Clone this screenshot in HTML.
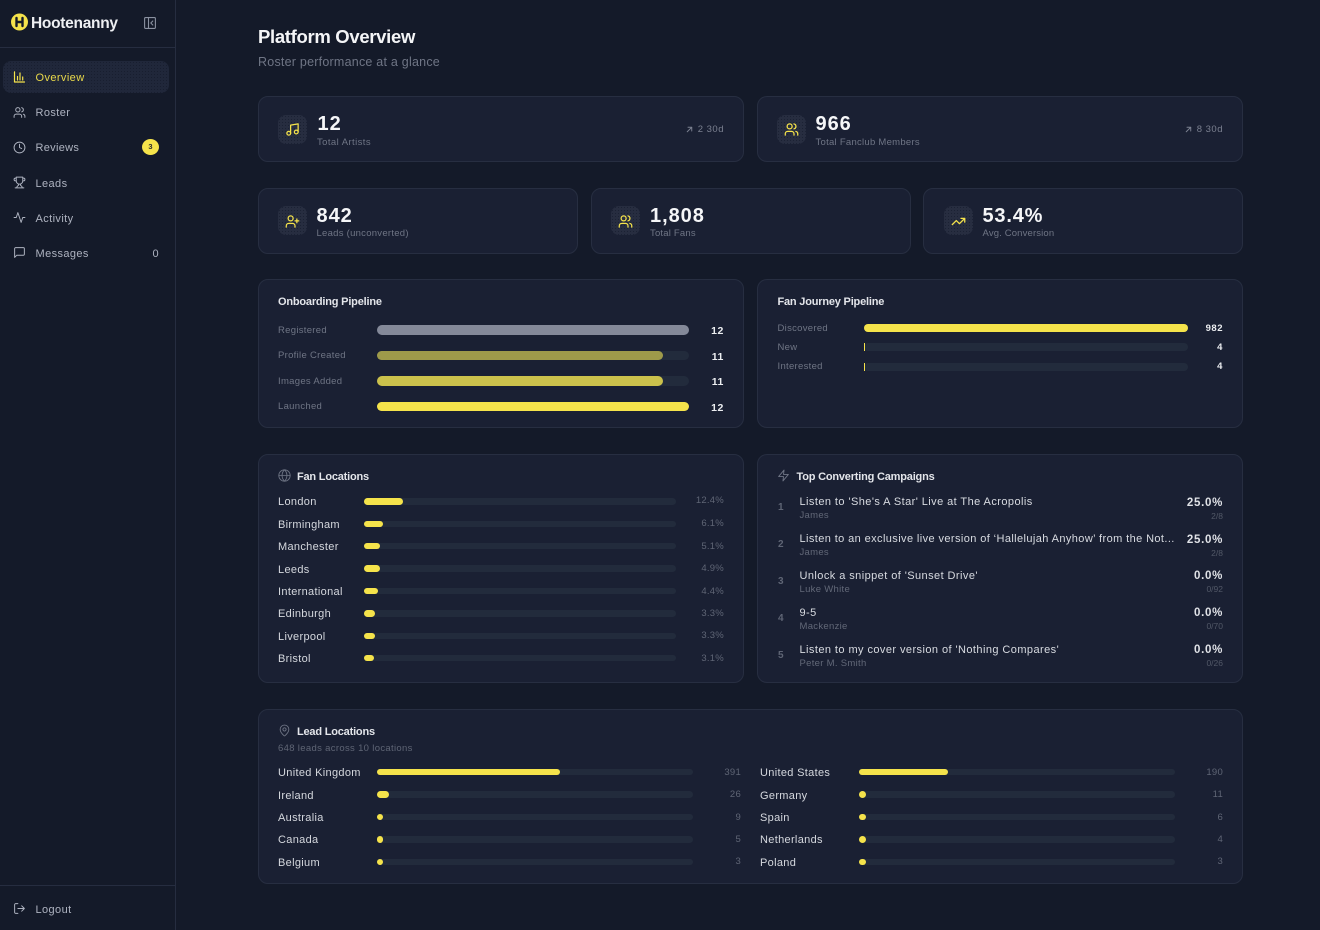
<!DOCTYPE html>
<html lang="en"><head><meta charset="utf-8"><title>Platform Overview</title>
<style>
*{box-sizing:border-box}
html,body{margin:0;padding:0;width:1320px;height:930px;overflow:hidden;background:#141a29;font-family:"Liberation Sans",sans-serif}
.a,.c,.t,.b,.i,svg{position:absolute}
.c{background:#1a2033;border:1px solid #272e41;border-radius:10px}
.t{white-space:nowrap;line-height:14px;height:14px;margin-top:2px}
.r{text-align:right;right:auto;transform:translateX(-100%)}
.nav{font-size:11px;color:#aeb3c0;letter-spacing:.4px;margin-top:1px}
.num{font-size:20px;font-weight:700;color:#f5f6f8;letter-spacing:.95px;line-height:20px;height:20px;margin-top:2px}
.lab{font-size:9.5px;color:#6f7585;letter-spacing:.27px}
.tr{font-size:9.5px;color:#7b8090;letter-spacing:.5px}
.h{font-size:11px;font-weight:700;color:#e3e5ea;letter-spacing:-.2px}
.pl{font-size:9.5px;color:#6f7585;letter-spacing:.3px}
.pv{font-size:10.5px;font-weight:700;color:#eceef1;letter-spacing:.6px}
.loc{font-size:11px;color:#d5d8de;letter-spacing:.32px}
.pc{font-size:9.5px;color:#5f6575;letter-spacing:.25px}
.cn{font-size:10px;font-weight:700;color:#5f6575}
.ct{font-size:11px;color:#d8dbe1;letter-spacing:.43px}
.cs{font-size:9.5px;color:#626878;letter-spacing:.3px}
.cp{font-size:11.5px;font-weight:700;color:#e0e2e7;letter-spacing:.7px}
.cf{font-size:8.5px;color:#525867;margin-top:1px}
.b{background:#222b3c;border-radius:5px}
.b i{position:absolute;left:0;top:0;bottom:0;background:#f5e34b;border-radius:5px;display:block}
.i{width:29px;height:29px;border-radius:8px;background-color:#272d40;background-image:radial-gradient(#1b2133 .6px,transparent .8px);background-size:3px 3px}
svg{fill:none;stroke-linecap:round;stroke-linejoin:round}
.y{stroke:#f5e34b;stroke-width:2}
.g{stroke:#aeb3c0;stroke-width:2}
.m{stroke:#6f7585;stroke-width:2}
</style></head><body>
<div class="a" style="left:0;top:0;width:176px;height:930px;border-right:1px solid #262d40;background:#141a29"></div>
<div class="a" style="left:0;top:47px;width:175px;height:1px;background:#262d40"></div>
<div class="a" style="left:0;top:885px;width:175px;height:1px;background:#262d40"></div>

<svg style="left:11px;top:13px" width="17" height="18" viewBox="0 0 17 18"><circle cx="8.5" cy="9" r="8.5" fill="#f5e34b"/><path d="M5.5 5v8M11.5 5v8M5.5 9h6" stroke="#141a29" stroke-width="2.4"/></svg>
<div class="t" style="left:31px;top:13px;height:18px;line-height:18px;font-size:15.5px;font-weight:700;color:#eef0f3;letter-spacing:-.28px">Hootenanny</div>
<svg style="left:143.500px;top:16.500px" width="12" height="12" viewBox="0 0 12 12"><rect x=".6" y=".6" width="10.800" height="10.800" rx="1" stroke="#8a91a0" stroke-width="1.100"/><path d="M4.500 .6v10.800M8.800 4L6.800 6l2 2" stroke="#8a91a0" stroke-width="1.100"/></svg>

<div class="a" style="left:3px;top:61px;width:166px;height:32px;border-radius:8px;background-color:#20273a;background-image:radial-gradient(#181e2f .6px,transparent .8px);background-size:3px 3px"></div>
<svg class="y" style="left:13px;top:71px;stroke-width:1.200" width="12" height="12" viewBox="0 0 12 12"><path d="M1.500 .8V11H11.500M4.500 9V5.500M7 9V2M9.700 9V6"/></svg>
<div class="t nav" style="left:35.500px;top:70px;color:#e9d94a">Overview</div>
<svg class="g" style="left:12.500px;top:105.500px;stroke-width:1.800" width="13" height="13" viewBox="0 0 24 24"><path d="M16 21v-2a4 4 0 0 0-4-4H6a4 4 0 0 0-4 4v2"/><circle cx="9" cy="7" r="4"/><path d="M22 21v-2a4 4 0 0 0-3-3.900M16 3.100a4 4 0 0 1 0 7.800"/></svg>
<div class="t nav" style="left:35.500px;top:105px">Roster</div>
<svg class="g" style="left:12.500px;top:140.500px;stroke-width:1.800" width="13" height="13" viewBox="0 0 24 24"><circle cx="12" cy="12" r="10"/><path d="M12 6v6l4 2"/></svg>
<div class="t nav" style="left:35.500px;top:140px;letter-spacing:.3px">Reviews</div>
<div class="a" style="left:142px;top:139px;width:17px;height:16px;border-radius:50%;background:#f5e34b"></div>
<div class="t" style="left:142px;top:138px;width:17px;text-align:center;font-size:7.500px;font-weight:700;color:#2a2c30">3</div>
<svg class="g" style="left:12.500px;top:176px;stroke-width:1.800" width="13" height="13" viewBox="0 0 24 24"><path d="M6 9H4.500a2.500 2.500 0 0 1 0-5H6M18 9h1.500a2.500 2.500 0 0 0 0-5H18M4 22h16M10 14.700V17c0 .6-.5 1-1 1.200C7.800 18.800 7 20.300 7 22M14 14.700V17c0 .6.5 1 1 1.200 1.200.6 2 2.100 2 3.800M18 2H6v7a6 6 0 0 0 12 0V2z"/></svg>
<div class="t nav" style="left:35.500px;top:176px">Leads</div>
<svg class="g" style="left:12.500px;top:211px;stroke-width:1.800" width="13" height="13" viewBox="0 0 24 24"><path d="M22 12h-4l-3 9L9 3l-3 9H2"/></svg>
<div class="t nav" style="left:35.500px;top:211px">Activity</div>
<svg class="g" style="left:12.500px;top:246px;stroke-width:1.800" width="13" height="13" viewBox="0 0 24 24"><path d="M21 15a2 2 0 0 1-2 2H7l-4 4V5a2 2 0 0 1 2-2h14a2 2 0 0 1 2 2z"/></svg>
<div class="t nav" style="left:35.500px;top:246px">Messages</div>
<div class="t r nav" style="left:159px;top:246px">0</div>
<svg class="g" style="left:12.500px;top:901.500px;stroke-width:1.800" width="13" height="13" viewBox="0 0 24 24"><path d="M9 21H5a2 2 0 0 1-2-2V5a2 2 0 0 1 2-2h4M16 17l5-5-5-5M21 12H9"/></svg>
<div class="t nav" style="left:35.500px;top:902px">Logout</div>

<div class="t" style="left:258px;top:24px;height:22px;line-height:22px;font-size:18.500px;font-weight:700;color:#f4f5f7;letter-spacing:-.32px">Platform Overview</div>
<div class="t" style="left:258px;top:52px;height:16px;line-height:16px;font-size:12.500px;color:#6f7585;letter-spacing:.23px">Roster performance at a glance</div>

<div class="c" style="left:258px;top:96px;width:486px;height:66px"></div>
<div class="c" style="left:757px;top:96px;width:486px;height:66px"></div>
<div class="c" style="left:258px;top:188px;width:320px;height:66px"></div>
<div class="c" style="left:591px;top:188px;width:320px;height:66px"></div>
<div class="c" style="left:923px;top:188px;width:320px;height:66px"></div>

<div class="i" style="left:278px;top:115px"></div>
<svg class="y" style="left:284.500px;top:121.500px;stroke-width:2" width="15" height="15" viewBox="0 0 24 24"><path d="M9 18V5l12-2v13"/><circle cx="6" cy="18" r="3"/><circle cx="18" cy="16" r="3"/></svg>
<div class="t num" style="left:317.500px;top:112px">12</div>
<div class="t lab" style="left:317px;top:134px;letter-spacing:.42px">Total Artists</div>
<svg class="m" style="left:685px;top:125px;stroke-width:2.600;stroke:#7b8090" width="9" height="9" viewBox="0 0 24 24"><path d="M6 18L18 6M8 6h10v10"/></svg>
<div class="t r tr" style="left:724px;top:121px">2 30d</div>

<div class="i" style="left:777px;top:115px"></div>
<svg class="y" style="left:784px;top:121.500px;stroke-width:2" width="15" height="15" viewBox="0 0 24 24"><path d="M16 21v-2a4 4 0 0 0-4-4H6a4 4 0 0 0-4 4v2"/><circle cx="9" cy="7" r="4"/><path d="M22 21v-2a4 4 0 0 0-3-3.900M16 3.100a4 4 0 0 1 0 7.800"/></svg>
<div class="t num" style="left:815.500px;top:112px">966</div>
<div class="t lab" style="left:815.500px;top:134px">Total Fanclub Members</div>
<svg class="m" style="left:1184px;top:125px;stroke-width:2.600;stroke:#7b8090" width="9" height="9" viewBox="0 0 24 24"><path d="M6 18L18 6M8 6h10v10"/></svg>
<div class="t r tr" style="left:1223px;top:121px">8 30d</div>

<div class="i" style="left:278px;top:206px"></div>
<svg class="y" style="left:284.500px;top:213.500px;stroke-width:2" width="15" height="15" viewBox="0 0 24 24"><path d="M16 21v-2a4 4 0 0 0-4-4H6a4 4 0 0 0-4 4v2"/><circle cx="9" cy="7" r="4"/><path d="M19 8v6M22 11h-6"/></svg>
<div class="t num" style="left:316.500px;top:204px">842</div>
<div class="t lab" style="left:316.500px;top:225px">Leads (unconverted)</div>

<div class="i" style="left:611px;top:206px"></div>
<svg class="y" style="left:617.500px;top:213.500px;stroke-width:2" width="15" height="15" viewBox="0 0 24 24"><path d="M16 21v-2a4 4 0 0 0-4-4H6a4 4 0 0 0-4 4v2"/><circle cx="9" cy="7" r="4"/><path d="M22 21v-2a4 4 0 0 0-3-3.900M16 3.100a4 4 0 0 1 0 7.800"/></svg>
<div class="t num" style="left:650px;top:204px">1,808</div>
<div class="t lab" style="left:650px;top:225px;letter-spacing:.2px">Total Fans</div>

<div class="i" style="left:944px;top:206px"></div>
<svg class="y" style="left:950.500px;top:213.500px;stroke-width:2" width="15" height="15" viewBox="0 0 24 24"><path d="M22 7l-8.500 8.500-5-5L2 17M16 7h6v6"/></svg>
<div class="t num" style="left:982.500px;top:204px;letter-spacing:.8px">53.4%</div>
<div class="t lab" style="left:982.500px;top:225px;letter-spacing:.15px">Avg. Conversion</div>

<div class="c" style="left:258px;top:279px;width:486px;height:149px"></div>
<div class="t h" style="left:278px;top:293px">Onboarding Pipeline</div>
<div class="t pl" style="left:278px;top:322px">Registered</div>
<div class="b" style="left:377px;top:325px;width:312px;height:10px"><i style="width:100%;background:#848999"></i></div>
<div class="t r pv" style="left:724px;top:322px">12</div>
<div class="t pl" style="left:278px;top:347px">Profile Created</div>
<div class="b" style="left:377px;top:351px;width:312px;height:9px"><i style="width:286px;background:#9e9a4a"></i></div>
<div class="t r pv" style="left:724px;top:348px">11</div>
<div class="t pl" style="left:278px;top:373px">Images Added</div>
<div class="b" style="left:377px;top:376px;width:312px;height:10px"><i style="width:286px;background:#cbc14c"></i></div>
<div class="t r pv" style="left:724px;top:373px">11</div>
<div class="t pl" style="left:278px;top:398px">Launched</div>
<div class="b" style="left:377px;top:402px;width:312px;height:9px"><i style="width:100%"></i></div>
<div class="t r pv" style="left:724px;top:399px">12</div>

<div class="c" style="left:757px;top:279px;width:486px;height:149px"></div>
<div class="t h" style="left:777.500px;top:293px">Fan Journey Pipeline</div>
<div class="t pl" style="left:777.500px;top:320px">Discovered</div>
<div class="b" style="left:864px;top:324px;width:324px;height:8px"><i style="width:100%"></i></div>
<div class="t r pv" style="left:1223px;top:320px;font-size:9.500px;letter-spacing:.5px">982</div>
<div class="t pl" style="left:777.500px;top:339px">New</div>
<div class="b" style="left:864px;top:343px;width:324px;height:8px"><i style="width:1px;border-radius:0"></i></div>
<div class="t r pv" style="left:1223px;top:339px;font-size:9.500px">4</div>
<div class="t pl" style="left:777.500px;top:358px">Interested</div>
<div class="b" style="left:864px;top:363px;width:324px;height:8px"><i style="width:1px;border-radius:0"></i></div>
<div class="t r pv" style="left:1223px;top:358px;font-size:9.500px">4</div>

<div class="c" style="left:258px;top:454px;width:486px;height:229px"></div>
<svg class="m" style="left:278px;top:469px;stroke-width:1.600" width="13" height="13" viewBox="0 0 24 24"><circle cx="12" cy="12" r="10.500"/><path d="M1.500 12h21M12 1.500c3 3 4.500 6.500 4.500 10.500S15 19.500 12 22.500C9 19.500 7.500 16 7.500 12S9 4.500 12 1.500z"/></svg>
<div class="t h" style="left:297px;top:468px">Fan Locations</div>
<div class="t loc" style="left:278px;top:493px">London</div><div class="b" style="left:364px;top:498px;width:312px;height:7px"><i style="width:39px"></i></div><div class="t r pc" style="left:724px;top:492px">12.4%</div>
<div class="t loc" style="left:278px;top:516px">Birmingham</div><div class="b" style="left:364px;top:521px;width:312px;height:6px"><i style="width:19px"></i></div><div class="t r pc" style="left:724px;top:515px">6.1%</div>
<div class="t loc" style="left:278px;top:538px">Manchester</div><div class="b" style="left:364px;top:543px;width:312px;height:6px"><i style="width:16px"></i></div><div class="t r pc" style="left:724px;top:538px">5.1%</div>
<div class="t loc" style="left:278px;top:561px">Leeds</div><div class="b" style="left:364px;top:565px;width:312px;height:7px"><i style="width:16px"></i></div><div class="t r pc" style="left:724px;top:560px">4.9%</div>
<div class="t loc" style="left:278px;top:583px">International</div><div class="b" style="left:364px;top:588px;width:312px;height:6px"><i style="width:14px"></i></div><div class="t r pc" style="left:724px;top:583px">4.4%</div>
<div class="t loc" style="left:278px;top:605px">Edinburgh</div><div class="b" style="left:364px;top:610px;width:312px;height:7px"><i style="width:11px"></i></div><div class="t r pc" style="left:724px;top:605px">3.3%</div>
<div class="t loc" style="left:278px;top:628px">Liverpool</div><div class="b" style="left:364px;top:633px;width:312px;height:6px"><i style="width:11px"></i></div><div class="t r pc" style="left:724px;top:627px">3.3%</div>
<div class="t loc" style="left:278px;top:650px">Bristol</div><div class="b" style="left:364px;top:655px;width:312px;height:6px"><i style="width:10px"></i></div><div class="t r pc" style="left:724px;top:650px">3.1%</div>

<div class="c" style="left:757px;top:454px;width:486px;height:229px"></div>
<svg class="m" style="left:777px;top:469px;stroke-width:1.700" width="13" height="13" viewBox="0 0 24 24"><path d="M13 2L3 14h9l-1 8 10-12h-9l1-8z"/></svg>
<div class="t h" style="left:796.500px;top:468px">Top Converting Campaigns</div>
<div class="t cn" style="left:778px;top:499px">1</div><div class="t ct" style="left:799.500px;top:493px">Listen to 'She's A Star' Live at The Acropolis</div><div class="t cs" style="left:799.500px;top:507px">James</div><div class="t r cp" style="left:1223px;top:494px">25.0%</div><div class="t r cf" style="left:1223px;top:508px">2/8</div>
<div class="t cn" style="left:778px;top:536px">2</div><div class="t ct" style="left:799.500px;top:530px;letter-spacing:.4px">Listen to an exclusive live version of ‘Hallelujah Anyhow’ from the Not...</div><div class="t cs" style="left:799.500px;top:544px">James</div><div class="t r cp" style="left:1223px;top:531px">25.0%</div><div class="t r cf" style="left:1223px;top:545px">2/8</div>
<div class="t cn" style="left:778px;top:573px">3</div><div class="t ct" style="left:799.500px;top:567px">Unlock a snippet of 'Sunset Drive'</div><div class="t cs" style="left:799.500px;top:581px">Luke White</div><div class="t r cp" style="left:1223px;top:567px">0.0%</div><div class="t r cf" style="left:1223px;top:581px">0/92</div>
<div class="t cn" style="left:778px;top:610px">4</div><div class="t ct" style="left:799.500px;top:604px">9-5</div><div class="t cs" style="left:799.500px;top:618px">Mackenzie</div><div class="t r cp" style="left:1223px;top:604px">0.0%</div><div class="t r cf" style="left:1223px;top:618px">0/70</div>
<div class="t cn" style="left:778px;top:647px">5</div><div class="t ct" style="left:799.500px;top:641px">Listen to my cover version of 'Nothing Compares'</div><div class="t cs" style="left:799.500px;top:655px">Peter M. Smith</div><div class="t r cp" style="left:1223px;top:641px">0.0%</div><div class="t r cf" style="left:1223px;top:655px">0/26</div>

<div class="c" style="left:258px;top:709px;width:985px;height:175px"></div>
<svg class="m" style="left:278px;top:724px;stroke-width:1.700" width="13" height="13" viewBox="0 0 24 24"><path d="M20 10c0 5-5.500 10.200-7.400 11.800a1 1 0 0 1-1.200 0C9.500 20.200 4 15 4 10a8 8 0 0 1 16 0z"/><circle cx="12" cy="10" r="3"/></svg>
<div class="t h" style="left:297px;top:723px">Lead Locations</div>
<div class="t pc" style="left:278px;top:740px;letter-spacing:.33px">648 leads across 10 locations</div>

<div class="t loc" style="left:278px;top:764px">United Kingdom</div><div class="b" style="left:377px;top:769px;width:316px;height:6px"><i style="width:183px"></i></div><div class="t r pc" style="left:741px;top:764px">391</div>
<div class="t loc" style="left:278px;top:787px">Ireland</div><div class="b" style="left:377px;top:791px;width:316px;height:7px"><i style="width:12px"></i></div><div class="t r pc" style="left:741px;top:786px">26</div>
<div class="t loc" style="left:278px;top:809px">Australia</div><div class="b" style="left:377px;top:814px;width:316px;height:6px"><i style="width:6px"></i></div><div class="t r pc" style="left:741px;top:809px">9</div>
<div class="t loc" style="left:278px;top:831px">Canada</div><div class="b" style="left:377px;top:836px;width:316px;height:7px"><i style="width:6px"></i></div><div class="t r pc" style="left:741px;top:831px">5</div>
<div class="t loc" style="left:278px;top:854px">Belgium</div><div class="b" style="left:377px;top:859px;width:316px;height:6px"><i style="width:6px"></i></div><div class="t r pc" style="left:741px;top:853px">3</div>

<div class="t loc" style="left:760px;top:764px">United States</div><div class="b" style="left:859px;top:769px;width:316px;height:6px"><i style="width:89px"></i></div><div class="t r pc" style="left:1223px;top:764px">190</div>
<div class="t loc" style="left:760px;top:787px">Germany</div><div class="b" style="left:859px;top:791px;width:316px;height:7px"><i style="width:7px"></i></div><div class="t r pc" style="left:1223px;top:786px">11</div>
<div class="t loc" style="left:760px;top:809px">Spain</div><div class="b" style="left:859px;top:814px;width:316px;height:6px"><i style="width:7px"></i></div><div class="t r pc" style="left:1223px;top:809px">6</div>
<div class="t loc" style="left:760px;top:831px">Netherlands</div><div class="b" style="left:859px;top:836px;width:316px;height:7px"><i style="width:7px"></i></div><div class="t r pc" style="left:1223px;top:831px">4</div>
<div class="t loc" style="left:760px;top:854px">Poland</div><div class="b" style="left:859px;top:859px;width:316px;height:6px"><i style="width:7px"></i></div><div class="t r pc" style="left:1223px;top:853px">3</div>
</body></html>
